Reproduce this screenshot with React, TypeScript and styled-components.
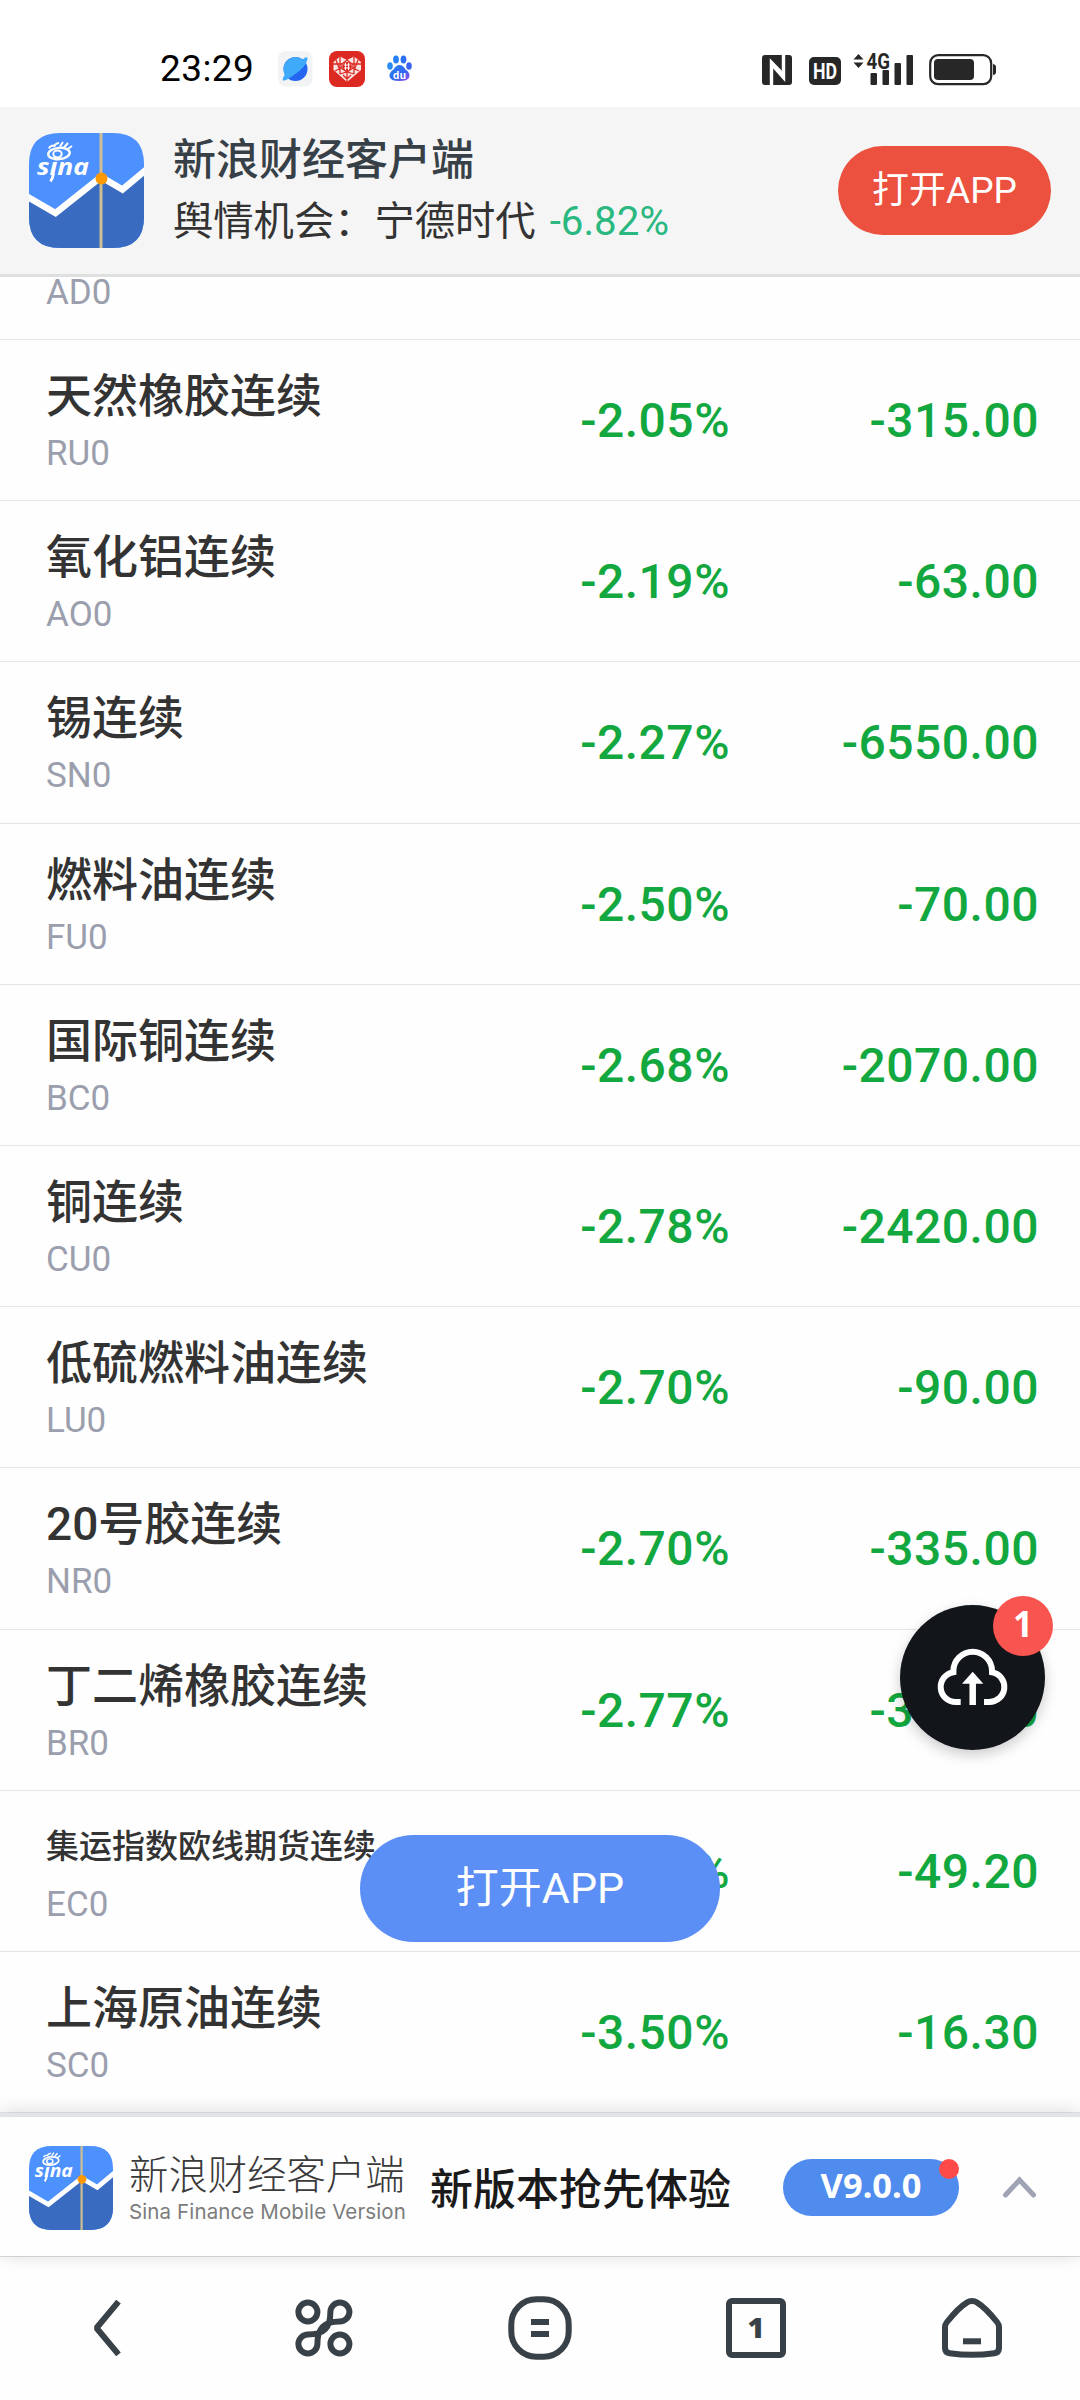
import React from "react";
import styled, { createGlobalStyle } from "styled-components";

const GlobalStyle = createGlobalStyle`
  * { box-sizing: border-box; }
  body {
    margin: 0;
    background: #fff;
    font-family: Roboto, "Noto Sans CJK SC", sans-serif;
    color: #333;
  }
`;

const Screen = styled.div`
  position: relative;
  display: flex;
  flex-direction: column;
  width: 1080px;
  height: 2400px;
  overflow: hidden;
  background: #fefefe;
`;

/* ---------- status bar ---------- */

const StatusBar = styled.div`
  display: flex;
  align-items: flex-start;
  justify-content: space-between;
  height: 107px;
  padding: 50px 83px 0 160px;
  background: #fff;
`;

const StatusGroup = styled.div`
  display: flex;
  align-items: center;
  height: 37px;
`;

const Clock = styled.span`
  width: 118px;
  font-size: 37px;
  line-height: 37px;
  letter-spacing: 0.4px;
  color: #000;
`;

const NoticeIcons = styled.div`
  display: grid;
  grid-template-columns: 51px 58px 25px;
  align-items: center;
`;

const SystemIconSet = styled.svg`
  overflow: visible;
`;

/* ---------- header ---------- */

const Header = styled.header`
  display: flex;
  align-items: center;
  flex: none;
  height: 170px;
  padding: 0 29px;
  background: #f5f5f5;
  border-bottom: 3px solid #dedfdf;
`;

const HeaderText = styled.div`
  flex: 1;
  margin-left: 29px;
  line-height: 62px;
  white-space: nowrap;
`;

const HeaderTitle = styled.div`
  font-size: 43px;
  font-weight: 500;
  color: #374046;
`;

const HeaderNews = styled.div`
  display: flex;
  gap: 14px;
  font-size: 40.3px;
  color: #333;
`;

const NewsChange = styled.span`
  font-size: 40.3px;
  color: #29b980;
`;

const OpenButton = styled.button<{ $color: string; $w: number; $h: number; $size: number }>`
  width: ${(p) => p.$w}px;
  height: ${(p) => p.$h}px;
  padding: 0;
  border: 0;
  border-radius: ${(p) => p.$h / 2}px;
  background: ${(p) => p.$color};
  color: #fff;
  font-family: inherit;
  font-size: ${(p) => p.$size}px;
  line-height: ${(p) => p.$h}px;
  text-align: center;
`;

/* ---------- quote list ---------- */

const List = styled.main`
  flex: 1;
  min-height: 0;
  overflow: hidden;
`;

const ListScroll = styled.div`
  margin-top: -98.2px;
`;

const Row = styled.div`
  display: grid;
  grid-template-columns: 1fr 300px 309px;
  height: 161.2px;
  padding: 0 41px 0 46px;
  border-bottom: 1px solid #e4e5e9;
`;

const NameCell = styled.div`
  padding-top: 25px;
  white-space: nowrap;
`;

const Name = styled.div<{ $small?: boolean }>`
  font-size: ${(p) => (p.$small ? 33 : 46)}px;
  font-weight: 500;
  line-height: 62px;
  color: #333;
`;

const Code = styled.div`
  font-size: 35px;
  line-height: 54px;
  color: #9b9fad;
`;

const Value = styled.div`
  padding-top: 1px;
  font-size: 48px;
  font-weight: 500;
  line-height: 160px;
  letter-spacing: 0.5px;
  text-align: right;
  color: #12a83f;
`;

/* ---------- floating controls ---------- */

const FloatingOpen = styled.div`
  position: absolute;
  top: 1835px;
  left: 360px;
`;

const UploadFab = styled.div`
  position: absolute;
  top: 1605px;
  left: 900px;
  width: 145px;
  height: 145px;
  border-radius: 50%;
  background: #12151a;
  box-shadow: 0 5px 14px rgba(0, 0, 0, 0.2);
`;

const FabBadge = styled.span`
  position: absolute;
  top: -9px;
  right: -8px;
  width: 60px;
  height: 60px;
  border-radius: 50%;
  background: #f95550;
  color: #fff;
  font: 700 35px/55px "Noto Sans", sans-serif;
  text-align: center;
`;

/* ---------- promo bar ---------- */

const Promo = styled.section`
  position: relative;
  display: flex;
  align-items: center;
  flex: none;
  height: 143px;
  padding: 2px 42px 0 29px;
  border-top: 4px solid #e3e4ea;
  background: #fefefe;
  box-shadow: 0 -1px 18px rgba(0, 0, 0, 0.14);
`;

const Brand = styled.div`
  width: 276px;
  margin-left: 16px;
  padding-top: 1px;
  white-space: nowrap;
`;

const BrandName = styled.div`
  font-size: 39.4px;
  font-weight: 300;
  line-height: 46px;
  color: #3a3a3a;
`;

const BrandSub = styled.div`
  font-family: Inter, sans-serif;
  font-size: 20.5px;
  line-height: 25px;
  letter-spacing: 0.12px;
  color: #7c7c7c;
`;

const PromoText = styled.div`
  width: 353px;
  margin-left: 25px;
  padding-top: 5px;
  font-size: 43px;
  font-weight: 500;
  line-height: 50px;
  white-space: nowrap;
  color: #1a1a1a;
`;

const Version = styled.div`
  position: relative;
  width: 176px;
  height: 57px;
  border-radius: 29px;
  background: #4f8cee;
  color: #fff;
  font: 700 34.5px/51px "Noto Sans", sans-serif;
  text-align: center;
`;

const RedDot = styled.i`
  position: absolute;
  top: 0;
  right: 0;
  width: 20px;
  height: 20px;
  border-radius: 50%;
  background: #ff4a4a;
`;

const Chevron = styled.svg`
  margin-left: auto;
`;

/* ---------- bottom navigation ---------- */

const Nav = styled.nav`
  display: grid;
  grid-template-columns: repeat(5, 1fr);
  place-items: center;
  flex: none;
  height: 144px;
  padding-bottom: 1px;
  border-top: 1px solid #dcdddd;
  background: #fefefe;
`;

const NavIcon = styled.svg`
  fill: none;
  stroke: #374147;
  stroke-width: 6;
`;

const TabCount = styled.div`
  width: 60px;
  height: 60px;
  border: 6px solid #374147;
  border-radius: 6px;
  font: 800 29px/46px "Open Sans", sans-serif;
  text-align: center;
  color: #374147;
`;

const SinaLogo = ({ size }: { size: number }) => {
  const id = `logo-${size}`;
  return (
    <svg width={size} height={size} viewBox="0 0 115 115">
      <defs>
        <clipPath id={id}>
          <path d="M31 0H84Q115 0 115 31V84Q115 115 84 115H31Q0 115 0 84V31Q0 0 31 0Z" />
        </clipPath>
      </defs>
      <g clipPath={`url(#${id})`}>
        <rect width="115" height="115" fill="#4d91ff" />
        <path d="M0 65L26 80L72 45L93.5 57L115 39V115H0Z" fill="#396cc1" />
        <path d="M-3 63L26.5 80L72 44L93.5 56.5L118 36" fill="none" stroke="#fff" strokeWidth="6.5" />
        <path d="M72 0V115" stroke="#cdbf91" strokeWidth="3" />
        <circle cx="72.5" cy="45.6" r="6" fill="#ff9900" />
        <ellipse cx="30" cy="20.5" rx="10.8" ry="5.6" fill="none" stroke="#fff" strokeWidth="2.4" transform="rotate(-6 30 20.5)" />
        <ellipse cx="28.5" cy="21" rx="4.2" ry="3.4" fill="none" stroke="#fff" strokeWidth="2" />
        <path
          d="M20 15.5Q21 12.500 25 12.500M25 14Q26 10.500 30 10M31 13.500L34 9M35 14.500L39 10M38 16.500L43 13"
          fill="none"
          stroke="#fff"
          strokeWidth="2"
        />
        <text
          x="8"
          y="42"
          textLength="52"
          lengthAdjust="spacingAndGlyphs"
          fill="#fff"
          fontFamily="Open Sans, sans-serif"
          fontSize="24"
          fontWeight="700"
          fontStyle="italic"
        >
          sina
        </text>
        <path d="M24.500 40Q24 45 21.500 48.500" fill="none" stroke="#fff" strokeWidth="2.800" />
      </g>
    </svg>
  );
};

const BrowserIcon = () => (
  <svg width="35" height="36" viewBox="0 0 35 36">
    <rect width="34.500" height="35.500" rx="8" fill="#f2f3f5" />
    <circle cx="17.500" cy="18" r="12" fill="#2465f2" />
    <path d="M5.700 20A12 12 0 0 1 24.500 8.400Q30 4.500 29.600 8Q28 16 16.500 23.500Q6 31.500 4.800 29Q4.500 27 6.800 23.500Z" fill="#3fa9fa" />
  </svg>
);

const ShopIcon = () => (
  <svg width="36" height="36" viewBox="0 0 36 36">
    <rect width="36" height="36" rx="8" fill="#dc2a23" />
    <path d="M18 31L4.500 19V11L11 5.500L18 9L25 5.500L32 11V19Z" fill="#fbe3e1" />
    <path
      d="M11 5V23M25 5V23M4 13H13L18 9L23 13H32M6 20L12 17L18 21L24 17L30 20M18 21V31M11 23L18 21L25 23M13 12V17M23 12V17M7 9L10 17M29 9L26 17M14 24L18 28L22 24"
      fill="none"
      stroke="#dc2a23"
      strokeWidth="1.300"
    />
    <circle cx="18" cy="15.500" r="4.400" fill="#dc2a23" />
    <path d="M15 14H21M15 17H21M16.500 12V19M19.500 12V19" stroke="#fff" strokeWidth="1" />
  </svg>
);

const PawIcon = () => (
  <svg width="25" height="27" viewBox="0 0 25 27">
    <defs>
      <linearGradient id="paw" x1="0" y1="0" x2="1" y2="1">
        <stop offset="0" stopColor="#2388f5" />
        <stop offset="0.600" stopColor="#3663ee" />
        <stop offset="1" stopColor="#a050e8" />
      </linearGradient>
    </defs>
    <ellipse cx="3" cy="11" rx="2.800" ry="3.800" fill="#2a8df5" />
    <ellipse cx="9" cy="4.500" rx="2.900" ry="4" fill="#2580f4" />
    <ellipse cx="16.500" cy="4.500" rx="2.900" ry="4" fill="#2d6ff2" />
    <ellipse cx="22" cy="11" rx="2.800" ry="3.800" fill="#3b63ee" />
    <path d="M12.500 10Q16 10 18.500 14.500Q23 17.500 22.500 21.500Q21.500 26 12.500 26Q3.500 26 2.500 21.500Q2 17.500 6.500 14.500Q9 10 12.500 10Z" fill="url(#paw)" />
    <text x="6" y="23.500" textLength="13" fill="#fff" fontFamily="Roboto, sans-serif" fontSize="11" fontWeight="700">du</text>
  </svg>
);

const SystemIcons = () => (
  <SystemIconSet width="235" height="36" viewBox="762 50 235 36" fill="#272727">
    <rect x="762" y="54" width="30" height="30" rx="3" />
    <path d="M771.500 84V61.500L784 74.500" fill="none" stroke="#fff" strokeWidth="3.400" />
    <path d="M783.500 54V76.500L772 63.500" fill="none" stroke="#fff" strokeWidth="3.400" />
    <rect x="809" y="56" width="32" height="28" rx="5" />
    <text x="813" y="78" textLength="24" lengthAdjust="spacingAndGlyphs" fill="#fff" fontFamily="Roboto, sans-serif" fontSize="21.500" fontWeight="700">HD</text>
    <path d="M853.500 58.500L858.500 53L863.500 58.500ZM853.500 61.500L858.500 67L863.500 61.500Z" />
    <rect x="870.500" y="72" width="6.500" height="12" rx="1" />
    <rect x="882.500" y="69" width="6.500" height="15" rx="1" />
    <rect x="894.500" y="62" width="6.500" height="22" rx="1" />
    <rect x="906.500" y="54" width="6.500" height="30" rx="1" />
    <text x="866.500" y="67.500" textLength="23.500" lengthAdjust="spacingAndGlyphs" fontFamily="Roboto, sans-serif" fontSize="21.500" fontWeight="700" stroke="#fff" strokeWidth="1.500" paintOrder="stroke">4G</text>
    <rect x="930.200" y="54.200" width="61" height="29" rx="8" fill="none" stroke="#272727" strokeWidth="2.200" />
    <rect x="934" y="58" width="40" height="21" rx="4" />
    <path d="M993 63Q996 63.500 996 66V71Q996 73.500 993 74Z" />
  </SystemIconSet>
);

const quotes: { name: string; code: string; pct: string; diff: string; small?: boolean }[] = [
  { name: "", code: "AD0", pct: "", diff: "" },
  { name: "天然橡胶连续", code: "RU0", pct: "-2.05%", diff: "-315.00" },
  { name: "氧化铝连续", code: "AO0", pct: "-2.19%", diff: "-63.00" },
  { name: "锡连续", code: "SN0", pct: "-2.27%", diff: "-6550.00" },
  { name: "燃料油连续", code: "FU0", pct: "-2.50%", diff: "-70.00" },
  { name: "国际铜连续", code: "BC0", pct: "-2.68%", diff: "-2070.00" },
  { name: "铜连续", code: "CU0", pct: "-2.78%", diff: "-2420.00" },
  { name: "低硫燃料油连续", code: "LU0", pct: "-2.70%", diff: "-90.00" },
  { name: "20号胶连续", code: "NR0", pct: "-2.70%", diff: "-335.00" },
  { name: "丁二烯橡胶连续", code: "BR0", pct: "-2.77%", diff: "-350.00" },
  { name: "集运指数欧线期货连续", code: "EC0", pct: "-2.88%", diff: "-49.20", small: true },
  { name: "上海原油连续", code: "SC0", pct: "-3.50%", diff: "-16.30" },
];

export default function App() {
  return (
    <Screen>
      <GlobalStyle />
      <StatusBar>
        <StatusGroup>
          <Clock>23:29</Clock>
          <NoticeIcons>
            <BrowserIcon />
            <ShopIcon />
            <PawIcon />
          </NoticeIcons>
        </StatusGroup>
        <StatusGroup>
          <SystemIcons />
        </StatusGroup>
      </StatusBar>

      <Header>
        <SinaLogo size={115} />
        <HeaderText>
          <HeaderTitle>新浪财经客户端</HeaderTitle>
          <HeaderNews>
            <span>舆情机会：宁德时代</span>
            <NewsChange>-6.82%</NewsChange>
          </HeaderNews>
        </HeaderText>
        <OpenButton $color="#ec503e" $w={213} $h={89} $size={37}>打开APP</OpenButton>
      </Header>

      <List>
        <ListScroll>
          {quotes.map((q) => (
            <Row key={q.code}>
              <NameCell>
                <Name $small={q.small}>{q.name || "\u00a0"}</Name>
                <Code>{q.code}</Code>
              </NameCell>
              <Value>{q.pct}</Value>
              <Value>{q.diff}</Value>
            </Row>
          ))}
        </ListScroll>
      </List>

      <Promo>
        <SinaLogo size={84} />
        <Brand>
          <BrandName>新浪财经客户端</BrandName>
          <BrandSub>Sina Finance Mobile Version</BrandSub>
        </Brand>
        <PromoText>新版本抢先体验</PromoText>
        <Version>
          V9.0.0
          <RedDot />
        </Version>
        <Chevron width="37" height="24" viewBox="0 0 37 24" fill="none" stroke="#9fa3b3" strokeWidth="5" strokeLinecap="round">
          <path d="M4.500 19L18.500 4L32.500 19" />
        </Chevron>
      </Promo>

      <Nav>
        <NavIcon width="72" height="72" viewBox="0 0 72 72">
          <path d="M46.500 9.700L24.500 36L46.500 62.300" strokeLinejoin="bevel" />
        </NavIcon>
        <NavIcon width="72" height="72" viewBox="0 0 72 72">
          <circle cx="19.900" cy="20" r="9.500" />
          <circle cx="51.900" cy="52" r="9.500" />
          <path d="M42.400 20A9.500 9.500 0 1 1 51.900 29.500C36 29.500 29.400 36 29.400 52A9.500 9.500 0 1 1 19.900 42.500C36 42.500 42.400 36 42.400 20Z" />
        </NavIcon>
        <NavIcon width="72" height="72" viewBox="0 0 72 72">
          <rect x="7.300" y="7.300" width="57.400" height="57.400" rx="25" />
          <path d="M27 30H45M27 42H45" />
        </NavIcon>
        <TabCount>1</TabCount>
        <NavIcon width="72" height="72" viewBox="0 0 72 72">
          <path d="M9 35Q9 32.500 11 30C17 22.500 25 14 30.500 10.800Q36 7.200 41.500 10.800C47 14 55 22.500 61 30Q63 32.500 63 35V56Q63 60.500 58.500 61.200Q36 64.500 13.500 61.200Q9 60.500 9 56Z" />
          <path d="M27 49.300H45" />
        </NavIcon>
      </Nav>

      <FloatingOpen>
        <OpenButton $color="#5b8ff5" $w={360} $h={107} $size={43}>打开APP</OpenButton>
      </FloatingOpen>

      <UploadFab>
        <svg width="145" height="145" viewBox="0 0 145 145" fill="none" stroke="#fff" strokeWidth="6">
          <path d="M60.700 97H55.700A15 15 0 0 1 53.400 67.180V66A19.300 19.300 0 0 1 92 66V67.240A15 15 0 0 1 89.300 97H84" />
          <path d="M72.700 78V100" strokeWidth="6.500" />
          <path d="M72.700 66.700L83.300 78.700H62Z" fill="#fff" stroke="none" />
        </svg>
        <FabBadge>1</FabBadge>
      </UploadFab>
    </Screen>
  );
}
